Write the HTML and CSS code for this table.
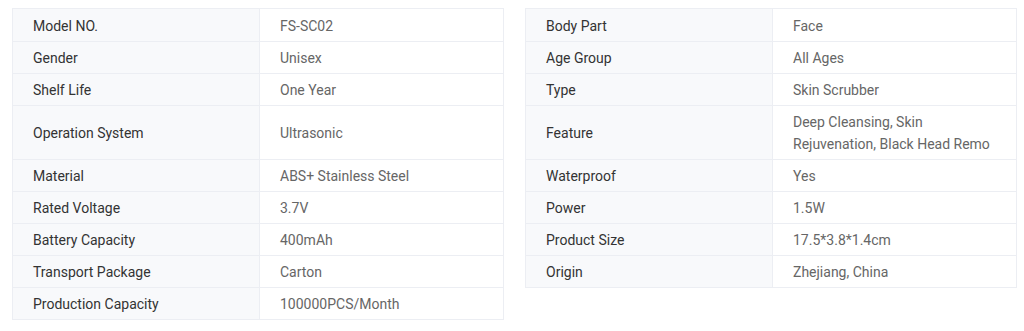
FILE: index.html
```html
<!DOCTYPE html>
<html lang="en">
<head>
    <meta charset="UTF-8">
    <title>Product Specifications</title>
    <link rel="stylesheet" href="styles.css">
</head>
<body>
    <!-- specs -->
    <div class="specs">
        <table class="spec-table">
            <tr><td class="label">Model NO.</td><td class="value">FS-SC02</td></tr>
            <tr><td class="label">Gender</td><td class="value">Unisex</td></tr>
            <tr><td class="label">Shelf Life</td><td class="value">One Year</td></tr>
            <tr class="tall"><td class="label">Operation System</td><td class="value">Ultrasonic</td></tr>
            <tr><td class="label">Material</td><td class="value">ABS+ Stainless Steel</td></tr>
            <tr><td class="label">Rated Voltage</td><td class="value">3.7V</td></tr>
            <tr><td class="label">Battery Capacity</td><td class="value">400mAh</td></tr>
            <tr><td class="label">Transport Package</td><td class="value">Carton</td></tr>
            <tr><td class="label">Production Capacity</td><td class="value">100000PCS/Month</td></tr>
        </table>
        <table class="spec-table">
            <tr><td class="label">Body Part</td><td class="value">Face</td></tr>
            <tr><td class="label">Age Group</td><td class="value">All Ages</td></tr>
            <tr><td class="label">Type</td><td class="value">Skin Scrubber</td></tr>
            <tr class="tall"><td class="label">Feature</td><td class="value">Deep Cleansing, Skin Rejuvenation, Black Head Remo</td></tr>
            <tr><td class="label">Waterproof</td><td class="value">Yes</td></tr>
            <tr><td class="label">Power</td><td class="value">1.5W</td></tr>
            <tr><td class="label">Product Size</td><td class="value">17.5*3.8*1.4cm</td></tr>
            <tr><td class="label">Origin</td><td class="value">Zhejiang, China</td></tr>
        </table>
    </div>
</body>
</html>
```

FILE: styles.css
```css
* {
    margin: 0;
    padding: 0;
    box-sizing: border-box;
}

body {
    background: #ffffff;
    font-family: Roboto, "Liberation Sans", sans-serif;
    font-size: 14px;
    padding: 8px 7px 0 12px;
}

.specs {
    display: flex;
    align-items: flex-start;
    gap: 21px;
}

.spec-table {
    width: 492px;
    border-collapse: collapse;
    table-layout: fixed;
    border: 1px solid #eceef3;
}

.spec-table td {
    border: 1px solid #eceef3;
    padding: 5px 20px 4px;
    line-height: 22px;
    vertical-align: middle;
}

/* first row a little taller */
.spec-table tr:first-child td {
    padding-top: 6px;
}

.spec-table .label {
    width: 247px;
    background-color: #f8f9fb;
    color: #333333;
}

.spec-table .value {
    color: #666666;
}

.spec-table .tall td {
    height: 54px;
}
```
